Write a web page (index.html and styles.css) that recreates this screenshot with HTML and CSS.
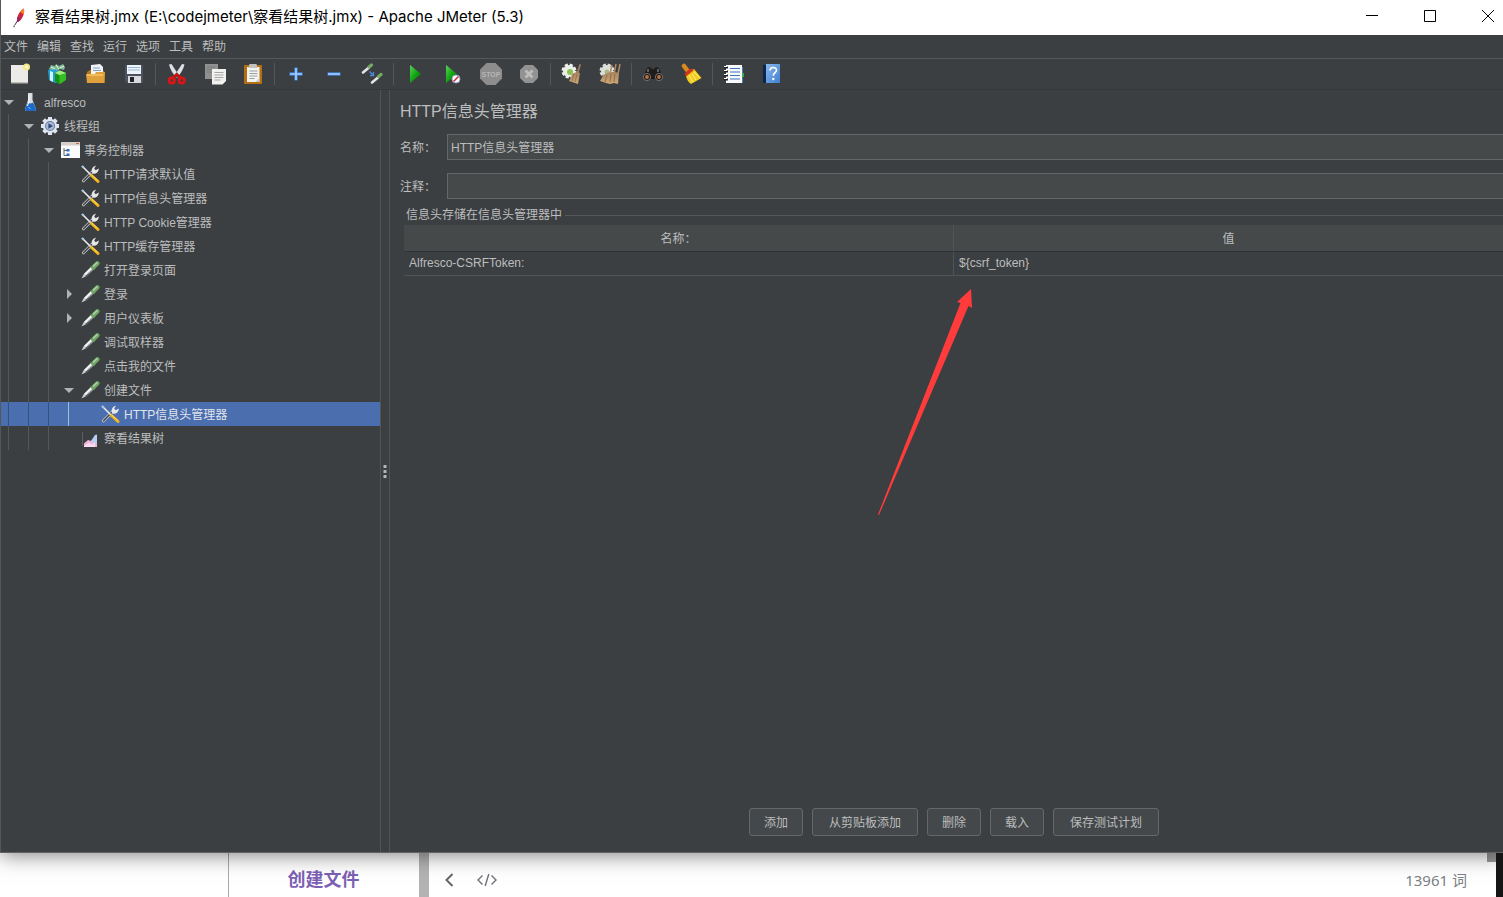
FILE: index.html
```
<!DOCTYPE html>
<html lang="zh-CN">
<head>
<meta charset="utf-8">
<title>察看结果树.jmx - Apache JMeter (5.3)</title>
<link rel="stylesheet" href="styles.css">
</head>
<body>
<svg class="defs" aria-hidden="true">
  <defs>
    <linearGradient id="green" x1="0" y1="0" x2="1" y2="1"><stop offset="0" stop-color="#5fd35f"/><stop offset=".5" stop-color="#12a512"/><stop offset="1" stop-color="#067006"/></linearGradient>
    <linearGradient id="straw" x1="0" y1="0" x2="0" y2="1"><stop offset="0" stop-color="#a98560"/><stop offset="1" stop-color="#cfa878"/></linearGradient>
    <linearGradient id="book" x1="0" y1="0" x2="1" y2="1"><stop offset="0" stop-color="#8ab8f0"/><stop offset="1" stop-color="#3f7fd0"/></linearGradient>
  </defs>
  <symbol id="tools" viewBox="0 0 20 20">
    <path d="M3.500 16.800 12.500 7.700" stroke="#c9cccf" stroke-width="3" stroke-linecap="round"/>
    <path d="M3.600 16.700 11.500 8.600" stroke="#3f4345" stroke-width="1.400" stroke-linecap="round"/>
    <path d="M12 8.200c-1-3 .8-6 4-6.500l-1.800 2.900 1.500 1.600 3-1.800c.4 3-2.300 5.400-5.300 5.300z" fill="#e4e6e8"/>
    <path d="M2.500 2.500 11 11" stroke="#e9ecef" stroke-width="1.600" stroke-linecap="round"/>
    <path d="M2 2 3.800 3.800" stroke="#a9c2dc" stroke-width="2.200"/>
    <path d="m11.500 11.500 6.500 6" stroke="#eeb21c" stroke-width="3" stroke-linecap="round"/>
    <path d="m11.700 11 6.200 5.600" stroke="#ffe07a" stroke-width=".9"/>
  </symbol>
  <symbol id="pipette" viewBox="0 0 20 20">
    <path d="M1.500 18.500 4 13.800 11 6.800l2.800 2.700-7.300 6.500z" fill="#d0d3d4"/>
    <path d="m5 16.400 3-2.200L13 9.500" stroke="#63676a" stroke-width="1" fill="none"/>
    <path d="m5 14.200 6.300-6.100" stroke="#fff" stroke-width="1.200" fill="none"/>
    <path d="m10.800 6.300 3.800 3.700" stroke="#4c7a47" stroke-width="1.300"/>
    <path d="m13.300 7.300 4-3.900" stroke="#72a567" stroke-width="4.400" stroke-linecap="round"/>
    <path d="m13.600 6 3.400-3.200" stroke="#b2d6a8" stroke-width="1.400" stroke-linecap="round"/>
  </symbol>
  <symbol id="gear" viewBox="0 0 20 20">
    <g fill="#dfe5ee"><path d="M8 1h4v18H8z"/><path d="M1 8h18v4H1z"/><path d="M8 1h4v18H8z" transform="rotate(45 10 10)"/><path d="M8 1h4v18H8z" transform="rotate(-45 10 10)"/><circle cx="10" cy="10" r="7.200"/></g>
    <circle cx="10" cy="10" r="5" fill="#66799c"/><circle cx="10" cy="10" r="4" fill="#a9bbd8"/><path d="m8.400 7.300 4.600 2.700-4.600 2.700z" fill="#304a7c"/>
  </symbol>
</svg>

<div class="app">
  <header class="titlebar">
    <svg class="feather" viewBox="0 0 16 24"><path d="M3.500 19.500 7 14" stroke="#4a2a5a" stroke-width="1" fill="none"/><path d="M6 16C5.300 11 8.500 5 12.800 2.500c1.200 4-1 10.500-5.500 13.500z" fill="#cf2338"/><path d="M9.500 6C10.500 4 12 3 12.800 2.500c.8 2 .5 4-.2 6z" fill="#f0872a"/><path d="M6 16c-.3-2 .3-4.500 1.200-6l2.300 4z" fill="#8b2a6a"/><circle cx="3" cy="20.500" r=".7" fill="#333"/></svg>
    <h1 class="caption">察看结果树.jmx (E:\codejmeter\察看结果树.jmx) - Apache JMeter (5.3)</h1>
    <div class="window-controls">
      <button aria-label="最小化"><svg viewBox="0 0 14 14"><path d="M1 6.500h12" stroke="#000"/></svg></button>
      <button aria-label="最大化"><svg viewBox="0 0 14 14"><path d="M1.500 1.500h11v11h-11z" stroke="#000" fill="none"/></svg></button>
      <button aria-label="关闭"><svg viewBox="0 0 14 14"><path d="m1 1 12 12M13 1 1 13" stroke="#000"/></svg></button>
    </div>
  </header>

  <nav class="menubar">
    <button>文件</button><button>编辑</button><button>查找</button><button>运行</button><button>选项</button><button>工具</button><button>帮助</button>
  </nav>

  <div class="toolbar">
    <button aria-label="新建"><svg viewBox="0 0 22 22"><path d="M2 2h17v18H2z" fill="#ecebe8"/><path d="M2 19h17v1.500H2z" fill="#bdbdb9"/><circle cx="17.500" cy="4" r="3.500" fill="#f4e98a"/><circle cx="17.500" cy="4" r="1.500" fill="#fffbd0"/></svg></button>
    <button aria-label="模板"><svg viewBox="0 0 22 22"><path d="m1 7 7-3 4 2v13l-4 1-6-3z" fill="#1f9fd8"/><path d="m3 8 3 1v10l-3-1.500z" fill="#d5f3fc"/><path d="m8 10 5-2.500 6 2.500v7l-6 4-5-2.500z" fill="#34bd25"/><path d="m8 10 4.500 2v9L8 18.500z" fill="#159310"/><path d="m8 10 5-2.500 6 2.500-6.500 2z" fill="#a1ec82"/><path d="m2 6 2-4 4 1 1-2 3 2 4-2 2 3-1 3-4-1-3 2-2-2-3 1z" fill="#7fb894"/><path d="m4 4 4 2m1-4 3 4m1-1 4-2" stroke="#e7f5e9"/></svg></button>
    <button aria-label="打开"><svg viewBox="0 0 22 22"><path d="M2 9 5 7h13l2 3v10H2z" fill="#b87615"/><path d="m6 2 9-1 3 3v9H6z" fill="#f1f3f7"/><path d="M8 5h7M8 7.500h8" stroke="#86a0c6"/><path d="M1 11h9l1-2h9l-1 11H2z" fill="#e0a03a"/><path d="M2 12h16" stroke="#ffd77e"/></svg></button>
    <button aria-label="保存"><svg viewBox="0 0 22 22"><path d="M2 2h18v18H4l-2-2z" fill="#4b5260"/><path d="M4 2h14v9H4z" fill="#edf4fa"/><path d="M5 4.500h12M5 7h12" stroke="#9bb9d6"/><path d="M5 13h13v7H5z" fill="#d8dadd"/><path d="M7 14h4v5H7z" fill="#22262c"/></svg></button>
    <hr>
    <button aria-label="剪切"><svg viewBox="0 0 22 22"><path d="M3 1.500 5.500 1 13 12.500 10.500 15C7 11 4 6 3 1.500zM18.500 1.500 16 1 8.500 12.500 11 15c3.500-4 6.500-9 7.500-13.500z" fill="#dde0e4"/><path d="m7 14.500 3.700-3 3.800 3" stroke="#c80e0e" stroke-width="2.800" fill="none"/><ellipse cx="5.800" cy="17.500" rx="2.700" ry="2.700" fill="none" stroke="#df1313" stroke-width="2.700"/><ellipse cx="15.700" cy="17.500" rx="2.700" ry="2.700" fill="none" stroke="#df1313" stroke-width="2.700"/></svg></button>
    <button aria-label="复制"><svg viewBox="0 0 22 22"><path d="M1 1h13v15H1z" fill="#8e9190"/><path d="M3 4h8M3 6.500h8M3 9h8" stroke="#777a79"/><path d="M8 6h14v12l-3.500 3.500H8z" fill="#f1f1ef"/><path d="M10.500 9.500h9M10.500 12h9M10.500 14.500h9M10.500 17h6" stroke="#a6a6a6"/></svg></button>
    <button aria-label="粘贴"><svg viewBox="0 0 22 22"><rect x="2" y="2" width="18" height="19" rx="1" fill="#b66e13"/><path d="M5 4h12.500v15H5z" fill="#f3f3f0"/><path d="M7.500 1h7l1 4h-9z" fill="#bfc2c0"/><path d="M7.500 8h8M7.500 10.500h8M7.500 13h8M7.500 15.500h5" stroke="#9a9da2"/><path d="m17.500 15-4 4h4z" fill="#c5c5c1"/></svg></button>
    <hr>
    <button aria-label="展开"><svg viewBox="0 0 22 22"><path d="M11 4.500v13M4.500 11h13" stroke="#3c7fd4" stroke-width="3.500"/><path d="M11 5v12M5 11h12" stroke="#a8d0ff" stroke-width="1.600"/></svg></button>
    <button aria-label="折叠"><svg viewBox="0 0 22 22"><path d="M4.500 11h13" stroke="#3c7fd4" stroke-width="3.500"/><path d="M5 11h12" stroke="#a8d0ff" stroke-width="1.600"/></svg></button>
    <button aria-label="切换"><svg viewBox="0 0 22 22"><path d="m2 9.500 6-5" stroke="#e2e5e6" stroke-width="2.600" stroke-linecap="round"/><path d="m8 4 2.500-2" stroke="#76a866" stroke-width="3.200" stroke-linecap="round"/><path d="m11 19.500 6-5" stroke="#e2e5e6" stroke-width="2.600" stroke-linecap="round"/><path d="m17.500 13.500 2.500-2" stroke="#76a866" stroke-width="3.200" stroke-linecap="round"/><path d="m8.500 8.500 4 4m0-3.500v3.500H9" stroke="#4f86d8" stroke-width="1.400" fill="none"/></svg></button>
    <hr>
    <button aria-label="启动"><svg viewBox="0 0 22 22"><path d="m6 2 11 9L6 20z" fill="url(#green)"/></svg></button>
    <button aria-label="不停顿开始"><svg viewBox="0 0 22 22"><path d="m4 2 11 9L4 20z" fill="url(#green)"/><circle cx="14" cy="16" r="4" fill="#fff" stroke="#9aa6c8"/><path d="m11.500 18.500 5-5" stroke="#d02a3a" stroke-width="1.600"/></svg></button>
    <button aria-label="停止" disabled><svg viewBox="0 0 22 22"><path d="M6.500 0h9L22 6.500v9L15.500 22h-9L0 15.500v-9z" fill="#8d8d8d"/><text x="11" y="14" class="stop-text" text-anchor="middle">STOP</text></svg></button>
    <button aria-label="关闭测试" disabled><svg viewBox="0 0 22 22"><path d="M7 2h8l5 5v8l-5 5H7l-5-5V7z" fill="#929292"/><path d="m7.500 7.500 7 7m0-7-7 7" stroke="#bdbdbd" stroke-width="2.800"/></svg></button>
    <hr>
    <button aria-label="清除"><svg viewBox="0 0 22 22"><circle cx="8" cy="8" r="6" fill="#ecefe9" stroke="#ecefe9" stroke-width="3" stroke-dasharray="3 1.700"/><circle cx="9" cy="9" r="3" fill="#8cc152"/><path d="m18.500 1 1.500.5-2.500 9-2-.5z" fill="#a07d5c"/><path d="M11 11q4-3 8-1l-2 11-9-3q2-3 3-7z" fill="url(#straw)"/><path d="m13 11-2 7m5-7-2 8" stroke="#8d6a49" stroke-width=".8"/></svg></button>
    <button aria-label="清除全部"><svg viewBox="0 0 22 22"><circle cx="8" cy="8" r="6" fill="#dde0da" stroke="#dde0da" stroke-width="3" stroke-dasharray="3 1.700"/><circle cx="8" cy="9" r="2.500" fill="#a5b98c"/><path d="m13 2-2 9m6-10-2 10m6-10-2 10" stroke="#b18b66" stroke-width="1.500"/><path d="M4 12q8-5 16-2l-1 11-4-1-4 1-4-1-6-2q2-3 3-6z" fill="url(#straw)"/><path d="m8 12-2 7m6-8-1 8m5-8-1 8" stroke="#8d6a49" stroke-width=".9"/></svg></button>
    <hr>
    <button aria-label="搜索"><svg viewBox="0 0 22 22"><path d="m2 12 3-7 3-1 2 2h2l2-2 3 1 3 7v4H2z" fill="#1f1d1c"/><path d="M6 6v3m10-3v3" stroke="#777" stroke-width="1.500"/><circle cx="5" cy="14" r="3.600" fill="#241b16" stroke="#74716e"/><circle cx="17" cy="14" r="3.600" fill="#241b16" stroke="#74716e"/><circle cx="5" cy="14" r="1.900" fill="#b87545"/><circle cx="17" cy="14" r="1.900" fill="#b87545"/></svg></button>
    <button aria-label="重置搜索"><svg viewBox="0 0 22 22"><path d="m4 3 3 4" stroke="#d98a1d" stroke-width="4.500" stroke-linecap="round"/><path d="m6 13 3-5 5-2 7.500 9L11 21q-4-3-5-8z" fill="#f4cd22"/><path d="m9 12 4 7m-1-8 4 6m-2-8 5 5" stroke="#fff07a"/><path d="m4.500 10.500 5.500-5 4 1.500-8 6.500z" fill="#cf3519"/></svg></button>
    <hr>
    <button aria-label="函数助手"><svg viewBox="0 0 22 22"><path d="M18 4h2v16h-2z" fill="#4978c8"/><path d="M18 10h3v4h-3z" fill="#3fa648"/><path d="M3 2h16v18H3z" fill="#f8fafc"/><path d="M7 5.500h10M7 9h10M7 12.500h10M7 16h10" stroke="#3a74bd" stroke-width="1.100"/><path d="M1 4.500h4M1 8.500h4M1 12.500h4M1 16.500h4" stroke="#222" stroke-width="1.800"/><path d="M1 3.500h3M1 7.500h3M1 11.500h3M1 15.500h3" stroke="#fff"/></svg></button>
    <button aria-label="帮助"><svg viewBox="0 0 22 22"><path d="M2 2h4v18H2z" fill="#0d2547"/><path d="M5 1h14v19H5z" fill="url(#book)"/><path d="M9 7.500c0-4 6.500-4 6.500-.3 0 2.300-3.200 2.800-3.200 5.600" stroke="#fff" stroke-width="1.600" fill="none"/><circle cx="12.300" cy="16" r="1.200" fill="#fff"/></svg></button>
  </div>

  <main class="workspace">
    <aside class="tree">
      <div class="row"><i class="toggle open"></i><svg class="icon" viewBox="0 0 20 20"><path d="M8 1h4.500v7L16 17q0 2-1.500 2h-8Q5 19 5 17L8 8z" fill="#d8dde2"/><path d="M7.500 11q3 1 5.500-.5L16 17q0 2-1.500 2h-8Q5 19 5 17z" fill="#1d69c9"/><path d="M9 3v6l-1.500 5" stroke="#fff" fill="none"/><path d="m8.500 15 2 2" stroke="#8cc0ff"/></svg><span>alfresco</span></div>
      <div class="row"><i class="guide"></i><i class="toggle open"></i><svg class="icon"><use href="#gear"/></svg><span>线程组</span></div>
      <div class="row"><i class="guide"></i><i class="guide"></i><i class="toggle open"></i><svg class="icon" viewBox="0 0 20 20"><path d="M1 2h19v16H1z" fill="#fafafa"/><path d="M1 2h19v3.500H1z" fill="#d9cfc9"/><path d="M16 3.500h3" stroke="#c46a4a"/><path d="M4 8v7.500h3M4 10.500h3" stroke="#666" fill="none"/><path d="M6.500 9h3v2.500h-3zM6.500 13.500h3V16h-3z" fill="#2a6dc0"/></svg><span>事务控制器</span></div>
      <div class="row"><i class="guide"></i><i class="guide"></i><i class="guide"></i><i class="toggle"></i><svg class="icon"><use href="#tools"/></svg><span>HTTP请求默认值</span></div>
      <div class="row"><i class="guide"></i><i class="guide"></i><i class="guide"></i><i class="toggle"></i><svg class="icon"><use href="#tools"/></svg><span>HTTP信息头管理器</span></div>
      <div class="row"><i class="guide"></i><i class="guide"></i><i class="guide"></i><i class="toggle"></i><svg class="icon"><use href="#tools"/></svg><span>HTTP Cookie管理器</span></div>
      <div class="row"><i class="guide"></i><i class="guide"></i><i class="guide"></i><i class="toggle"></i><svg class="icon"><use href="#tools"/></svg><span>HTTP缓存管理器</span></div>
      <div class="row"><i class="guide"></i><i class="guide"></i><i class="guide"></i><i class="toggle"></i><svg class="icon"><use href="#pipette"/></svg><span>打开登录页面</span></div>
      <div class="row"><i class="guide"></i><i class="guide"></i><i class="guide"></i><i class="toggle closed"></i><svg class="icon"><use href="#pipette"/></svg><span>登录</span></div>
      <div class="row"><i class="guide"></i><i class="guide"></i><i class="guide"></i><i class="toggle closed"></i><svg class="icon"><use href="#pipette"/></svg><span>用户仪表板</span></div>
      <div class="row"><i class="guide"></i><i class="guide"></i><i class="guide"></i><i class="toggle"></i><svg class="icon"><use href="#pipette"/></svg><span>调试取样器</span></div>
      <div class="row"><i class="guide"></i><i class="guide"></i><i class="guide"></i><i class="toggle"></i><svg class="icon"><use href="#pipette"/></svg><span>点击我的文件</span></div>
      <div class="row"><i class="guide"></i><i class="guide"></i><i class="guide"></i><i class="toggle open"></i><svg class="icon"><use href="#pipette"/></svg><span>创建文件</span></div>
      <div class="row selected"><i class="guide"></i><i class="guide"></i><i class="guide"></i><i class="guide"></i><i class="toggle"></i><svg class="icon"><use href="#tools"/></svg><span>HTTP信息头管理器</span></div>
      <div class="row"><i class="guide"></i><i class="guide"></i><i class="guide"></i><i class="toggle"></i><svg class="icon" viewBox="0 0 20 20"><path d="M2.500 4v14" stroke="#5d6062"/><path d="M4 19v-3.500l4-3.500 3 1 6-6v12z" fill="#f0b5dc"/><path d="m11 13 4-6 2-.5V15l-3 2z" fill="#b9cff2"/><path d="m4 18 5-3.500 3 2 3-2.500v5H4z" fill="#fbd9ee"/></svg><span>察看结果树</span></div>
    </aside>

    <div class="splitter"><svg viewBox="0 0 4 14"><path d="M.5 1h3v3h-3zM.5 6h3v3h-3zM.5 11h3v3h-3z" fill="#b3b6b7"/></svg></div>

    <section class="editor">
      <h2 class="heading">HTTP信息头管理器</h2>
      <div class="field"><label for="name">名称：</label><input id="name" type="text" value="HTTP信息头管理器"></div>
      <div class="field"><label for="comment">注释：</label><input id="comment" type="text"></div>
      <div class="group-title"><span>信息头存储在信息头管理器中</span></div>
      <div class="group-body">
        <table>
          <thead><tr><th>名称：</th><th>值</th></tr></thead>
          <tbody><tr><td>Alfresco-CSRFToken:</td><td>${csrf_token}</td></tr></tbody>
        </table>
      </div>
      <footer class="actions">
        <button>添加</button><button class="long">从剪贴板添加</button><button>删除</button><button>载入</button><button class="long">保存测试计划</button>
      </footer>
      <svg class="arrow" viewBox="0 0 96 228"><path d="M94 1 80 14l3.500 1L1 226.500l1 .5L91.500 18l3.500 2z" fill="#ff3b3b"/></svg>
    </section>
  </main>
</div>

<div class="behind">
  <div class="outline"><p>创建文件</p></div>
  <div class="scrollbar"></div>
  <div class="status">
    <button aria-label="返回"><svg viewBox="0 0 20 20"><path d="M13.500 4 7.500 10l6 6" stroke="#666" stroke-width="2" fill="none"/></svg></button>
    <button aria-label="源代码"><svg viewBox="0 0 20 20"><path d="M5.500 5.500 1 10l4.500 4.500M14.500 5.500 19 10l-4.500 4.500M11.800 4 8.200 16" stroke="#6f7276" stroke-width="1.400" fill="none"/></svg></button>
    <span class="count">13961 词</span>
    <i class="thumb"></i>
  </div>
  <div class="edge"></div>
</div>
</body>
</html>
```
FILE: styles.css
```
* { box-sizing: border-box; }

body {
  margin: 0;
  height: 100vh;
  display: flex;
  flex-direction: column;
  overflow: hidden;
  background: #fff;
  color: #bbbdbe;
  font: 12px/16px "Liberation Sans", "Noto Sans CJK SC", sans-serif;
}

button { font: inherit; color: inherit; border: 0; padding: 0; background: none; }
h1, h2, p { margin: 0; font-weight: normal; }
svg { display: block; flex: none; }
.defs { position: absolute; width: 0; height: 0; }

.app {
  position: relative;
  z-index: 1;
  flex: 1;
  min-height: 0;
  display: flex;
  flex-direction: column;
  background: #3c3f41;
  border-left: 1px solid #55585a;
  border-bottom: 1px solid #606365;
  box-shadow: 0 2px 20px rgba(0, 0, 0, 0.5);
}

.titlebar {
  height: 35px;
  flex: none;
  display: flex;
  align-items: center;
  padding-left: 10px;
  background: #fff;
  color: #000;
}
.feather { width: 16px; height: 24px; margin-right: 8px; }
.caption { flex: 1; font: 15px/20px Inter, "Noto Sans CJK SC", sans-serif; padding-bottom: 2px; white-space: nowrap; }
.window-controls { display: flex; align-self: stretch; padding-bottom: 3px; margin-right: -15px; }
.window-controls button { width: 58px; display: grid; place-items: center; }
.window-controls svg { width: 14px; height: 14px; margin-right: 2px; }

.menubar {
  height: 24px;
  flex: none;
  display: flex;
  align-items: center;
  gap: 9px;
  padding-left: 3px;
  border-bottom: 1px solid #555859;
}

.toolbar {
  height: 31px;
  flex: none;
  display: flex;
  align-items: center;
  border-bottom: 1px solid #35383a;
}
.toolbar button { width: 38px; height: 30px; display: grid; place-items: center; }
.toolbar svg { width: 22px; height: 22px; }
.toolbar hr { width: 1px; height: 22px; margin: 0 2px; border: 0; background: #55585a; }
.stop-text { font: bold 7px "Liberation Sans", sans-serif; fill: #b5b5b5; }

.workspace { flex: 1; min-height: 0; display: flex; }

.tree { width: 379px; flex: none; }
.row { display: flex; align-items: center; height: 24px; white-space: nowrap; }
.row span { margin-left: 4px; padding-top: 1px; }
.guide { width: 13px; height: 24px; margin-left: 7px; border-left: 1px solid #55585a; }
.toggle { width: 18px; display: grid; place-items: center; }
.toggle::before { content: ""; }
.open::before { border: 5px solid transparent; border-top-color: #b0b3b4; border-bottom: 0; margin-right: 2px; }
.closed::before { border: 5px solid transparent; border-left-color: #b0b3b4; border-right: 0; margin-right: 2px; }
.icon { width: 20px; height: 20px; margin-left: 1px; }
.selected { background: #4b6eaf; color: #e0e4ea; }
.selected .guide { border-color: #34517f; }
.selected .guide:nth-child(4) { border-color: #a5bbe2; }

.splitter {
  width: 10px;
  flex: none;
  display: grid;
  place-items: center;
  border: solid #515456;
  border-width: 0 1px;
}
.splitter svg { width: 4px; height: 14px; }

.editor {
  position: relative;
  flex: 1;
  min-width: 0;
  display: flex;
  flex-direction: column;
  padding: 10px 0 16px 10px;
}
.heading { font-size: 16px; line-height: 24px; margin-bottom: 10px; }
.field { display: flex; align-items: center; margin-bottom: 13px; }
.field label { width: 47px; flex: none; padding-top: 1px; }
.field input {
  flex: 1;
  min-width: 0;
  height: 26px;
  padding: 0 3px 1px;
  border: 1px solid #646769;
  border-right: 0;
  background: #45494a;
  color: inherit;
  font: inherit;
}
.group-title { display: flex; align-items: center; gap: 3px; margin-top: -5px; padding-left: 6px; }
.group-title::after { content: ""; flex: 1; height: 1px; background: #55585a; }
.group-body { flex: 1; padding: 2px 0 0 4px; }
table { width: 100%; table-layout: fixed; border-collapse: collapse; }
th { height: 26px; padding: 2px 0 0; font-weight: normal; background: #45494a; border-bottom: 1px solid #303335; }
td { height: 24px; padding: 0 5px; border-bottom: 1px solid #515456; }
th + th, td + td { border-left: 1px solid #515456; }

.actions { display: flex; justify-content: center; gap: 9px; padding-left: 5px; }
.actions button {
  height: 28px;
  padding: 1px 14px 0;
  border: 1px solid #65686a;
  border-radius: 3px;
  background: #44484a;
}
.actions .long { padding: 1px 16px 0; }

/* annotation lying over the editor */
.arrow { position: absolute; left: 487px; top: 198px; width: 96px; height: 228px; }

.behind { height: 44px; flex: none; display: flex; }
.outline {
  width: 191px;
  margin-left: 228px;
  flex: none;
  padding: 14px 1px 0 0;
  border-left: 1px solid #aaa;
  color: #7d5fb5;
  text-align: center;
  font: 18px/24px "Open Sans", "Noto Sans CJK SC", sans-serif;
}
.outline p { font-weight: bold; }
.scrollbar { width: 10px; flex: none; background: #b3b3b3; }
.status {
  flex: 1;
  display: flex;
  align-items: center;
  gap: 18px;
  padding: 10px 0 0 10px;
  color: #7b7f85;
}
.status button svg { width: 20px; height: 20px; }
.count { margin-left: auto; font: 15px/20px "Noto Sans", "Noto Sans CJK SC", sans-serif; }
.thumb { width: 9px; height: 9px; margin: -10px 0 0 2px; align-self: flex-start; background: #999; }
.edge { width: 7px; flex: none; background: #151515; position: relative; z-index: 2; }
```
